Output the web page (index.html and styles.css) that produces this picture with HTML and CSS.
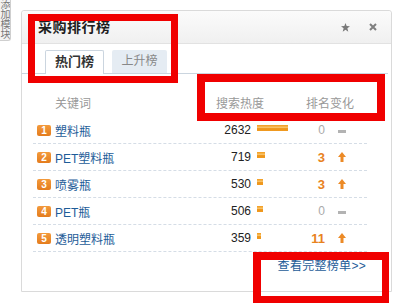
FILE: index.html
```html
<!DOCTYPE html>
<html lang="zh-CN">
<head>
  <meta charset="UTF-8">
  <title>采购排行榜</title>
  <link rel="stylesheet" href="styles.css">
</head>
<body>

<!-- side tab -->
<div class="side-tab">添加模块</div>

<div class="panel">
  <div class="panel-head">
    <h3 class="panel-title">采购排行榜</h3>
    <div class="panel-actions">
      <svg class="ico-star" width="9" height="9" viewBox="0 0 10 10"><polygon points="5,0 6.3,3.4 10,3.6 7.1,5.9 8.1,9.6 5,7.5 1.9,9.6 2.9,5.9 0,3.6 3.7,3.4" fill="#7a7a7a"/></svg>
      <svg class="ico-close" width="8" height="8" viewBox="0 0 8 8"><path d="M1 1 L7 7 M7 1 L1 7" stroke="#7f7f7f" stroke-width="2"/></svg>
    </div>
  </div>

  <div class="tabs">
    <span class="tab active">热门榜</span>
    <span class="tab">上升榜</span>
  </div>

  <div class="rank">
    <div class="cols">
      <span class="col-kw">关键词</span>
      <span class="col-heat">搜索热度</span>
      <span class="col-chg">排名变化</span>
    </div>

    <div class="row">
      <span class="badge">1</span>
      <a class="kw">塑料瓶</a>
      <span class="num">2632</span>
      <span class="bar-cell"><i class="bar" style="width:31px"></i></span>
      <span class="chg">0</span>
      <span class="trend"><i class="flat"></i></span>
    </div>
    <div class="row">
      <span class="badge">2</span>
      <a class="kw">PET塑料瓶</a>
      <span class="num">719</span>
      <span class="bar-cell"><i class="bar" style="width:8px"></i></span>
      <span class="chg up">3</span>
      <span class="trend"><svg width="8" height="10" viewBox="0 0 8 10"><polygon points="4,0 8,5 5.5,5 5.5,10 2.5,10 2.5,5 0,5" fill="#ec8a26"/></svg></span>
    </div>
    <div class="row">
      <span class="badge">3</span>
      <a class="kw">喷雾瓶</a>
      <span class="num">530</span>
      <span class="bar-cell"><i class="bar" style="width:6px"></i></span>
      <span class="chg up">3</span>
      <span class="trend"><svg width="8" height="10" viewBox="0 0 8 10"><polygon points="4,0 8,5 5.5,5 5.5,10 2.5,10 2.5,5 0,5" fill="#ec8a26"/></svg></span>
    </div>
    <div class="row">
      <span class="badge">4</span>
      <a class="kw">PET瓶</a>
      <span class="num">506</span>
      <span class="bar-cell"><i class="bar" style="width:6px"></i></span>
      <span class="chg">0</span>
      <span class="trend"><i class="flat"></i></span>
    </div>
    <div class="row">
      <span class="badge">5</span>
      <a class="kw">透明塑料瓶</a>
      <span class="num">359</span>
      <span class="bar-cell"><i class="bar" style="width:4px"></i></span>
      <span class="chg up">11</span>
      <span class="trend"><svg width="8" height="10" viewBox="0 0 8 10"><polygon points="4,0 8,5 5.5,5 5.5,10 2.5,10 2.5,5 0,5" fill="#ec8a26"/></svg></span>
    </div>

    <div class="more"><a>查看完整榜单&gt;&gt;</a></div>
  </div>
</div>

<!-- annotation boxes -->
<div class="mark mark-title"></div>
<div class="mark mark-cols"></div>
<div class="mark mark-more"></div>

</body>
</html>
```

FILE: styles.css
```css
body { margin: 0; padding: 10px 0 0 21px; width: 404px; height: 306px; box-sizing: border-box; overflow: hidden; position: relative; background: #fff; font-family: "Liberation Sans", "Noto Sans CJK SC", sans-serif; font-size: 12px; color: #333; }

.side-tab { position: absolute; left: -2px; top: 0; width: 12px; height: 41px; background: #f3f3f3; border-right: 1px solid #cfcfcf; border-bottom: 1px solid #cfcfcf; border-radius: 0 0 3px 0; overflow: hidden; writing-mode: vertical-rl; font-size: 10px; line-height: 12px; color: #777; margin-top: -1px; }

.panel { width: 371px; height: 282px; box-sizing: border-box; border: 1px solid #dadada; border-radius: 3px 3px 0 0; }

.panel-head { display: flex; align-items: center; justify-content: space-between; height: 32px; padding: 0 14px 0 16px; background: linear-gradient(#fbfbfb, #f0f0f0); border-bottom: 1px solid #e2e2e2; border-radius: 3px 3px 0 0; }
.panel-title { margin: 0; font-size: 14px; font-weight: bold; color: #1e1e1e; line-height: 16px; letter-spacing: 0.5px; }
.panel-actions { display: flex; align-items: center; gap: 19px; }

.tabs { display: flex; gap: 8px; height: 23px; margin: 6px 3px 0 0; padding-left: 23px; border-bottom: 1px solid #cbd5df; }
.tab { width: 55px; height: 23px; box-sizing: border-box; line-height: 23px; text-align: center; background: #e5ecf3; color: #888; border-radius: 2px 2px 0 0; }
.tab.active { width: 59px; height: 24px; background: #fff; border: 1px solid #cbd5df; border-bottom: none; font-size: 13px; font-weight: bold; color: #333; line-height: 22px; }

.rank { margin: 0 24px 0 11px; }
.cols { display: flex; padding: 18px 0 1px 22px; line-height: 24px; color: #999; }
.col-kw { width: 161px; }
.col-heat { width: 90px; }

.row { display: flex; align-items: center; height: 26px; padding-left: 4px; border-bottom: 1px dashed #d5dde6; }
.badge { width: 14px; height: 11px; line-height: 11px; border-radius: 2px; background: linear-gradient(#f39a3c, #e47c1d); color: #fff; font-size: 10px; font-weight: bold; text-align: center; }
.kw { width: 156px; margin-left: 4px; color: #1d5c98; text-decoration: none; }
.num { width: 40px; text-align: right; color: #222; }
.bar-cell { width: 45px; margin-left: 6px; align-self: flex-start; padding-top: 8px; }
.bar { display: block; height: 6px; background: linear-gradient(#f29a1c, #f8c56d 45%, #ee9418 60%, #f09b22); }
.chg { width: 23px; text-align: right; color: #aaa; }
.chg.up { color: #e8821e; font-weight: bold; font-size: 13px; }
.trend { margin-left: 13px; width: 8px; display: flex; align-items: center; }
.flat { display: block; width: 8px; height: 3px; margin-top: 2px; background: #b3b3b3; }

.more { margin-top: 6px; padding-right: 1px; text-align: right; line-height: 16px; }
.more a { color: #1d5c98; text-decoration: none; letter-spacing: 0.3px; }

.mark { position: absolute; border: 7px solid #f00000; box-sizing: border-box; }
.mark-title { left: 28px; top: 14px; width: 150px; height: 69px; }
.mark-cols { left: 197px; top: 74px; width: 188px; height: 47px; border-width: 8px; }
.mark-more { left: 253px; top: 252px; width: 136px; height: 51px; border-width: 8px 7px 7px 8px; }
```
